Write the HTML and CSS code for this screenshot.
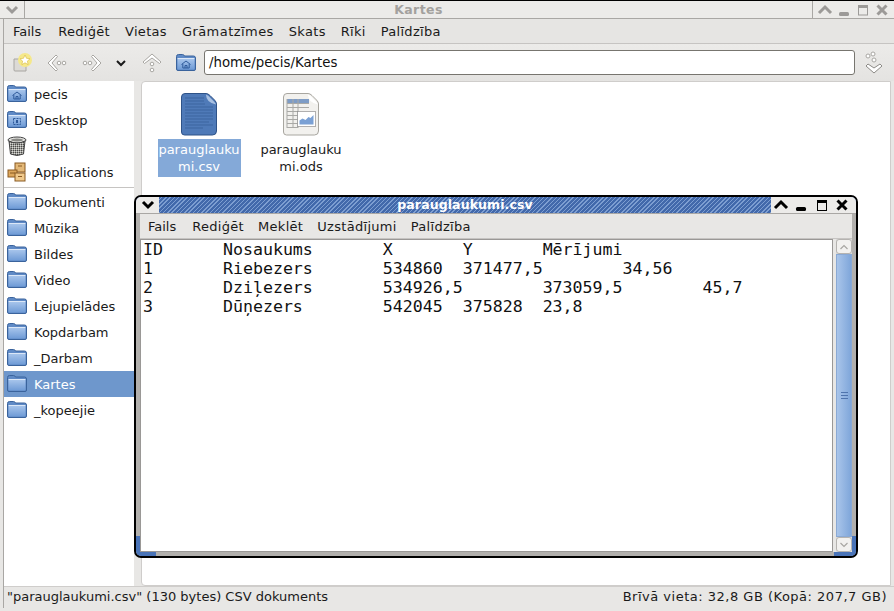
FILE: index.html
```html
<!DOCTYPE html>
<html lang="lv">
<head>
<meta charset="utf-8">
<title>Kartes</title>
<link rel="stylesheet" href="styles.css">
</head>
<body>
<svg class="defs" width="0" height="0">
  <defs>
    <linearGradient id="fg" x1="0" y1="0" x2="0" y2="1"><stop offset="0" stop-color="#a9c6ec"/><stop offset="1" stop-color="#6f9bd6"/></linearGradient>
    <symbol id="folder" viewBox="0 0 20 20">
      <path d="M.5 3.500q0-2 2-2h4q1.500 0 2 1.500h9q2 0 2 2v11q0 1.500-1.500 1.500h-16q-1.500 0-1.500-1.500z" fill="#5f8ac6" stroke="#3a639c"/>
      <rect x="1.500" y="5.500" width="17" height="11" rx="1" fill="url(#fg)"/>
      <path d="M1.500 5.500h17" stroke="#dbe7f7"/>
    </symbol>
    <symbol id="homefolder" viewBox="0 0 20 20">
      <use href="#folder"/>
      <path d="M5.500 11.500l4.500-3.500 4.500 3.500M6.800 11v4h6.400v-4M9 15v-2.500h2v2.500" fill="none" stroke="#2f5a9a"/>
    </symbol>
    <pattern id="hatch" width="2" height="2" patternUnits="userSpaceOnUse"><rect width="2" height="2" fill="#9a9a96"/><rect width="1" height="1" fill="#4a4a48"/><rect x="1" y="1" width="1" height="1" fill="#d8d8d4"/></pattern>
  </defs>
</svg>
<div class="app">
  <header class="titlebar">
    <span class="tb-btn tb-menu"><svg width="14" height="10" viewBox="0 0 14 10"><path d="M2 2l5 5 5-5" fill="none" stroke="#9c9a98" stroke-width="3"/></svg></span>
    <span class="title">Kartes</span>
    <span class="tb-btn-group">
      <svg width="16" height="14" viewBox="0 0 16 14"><path d="M2 10l6-6 6 6" fill="none" stroke="#9c9a98" stroke-width="3"/></svg>
      <svg width="16" height="14" viewBox="0 0 16 14"><rect x="3" y="9" width="10" height="4" rx="1.500" fill="#9c9a98"/></svg>
      <svg width="16" height="14" viewBox="0 0 16 14"><rect x="3.500" y="2.500" width="9" height="9.500" fill="none" stroke="#9c9a98"/><rect x="3" y="2" width="10" height="3" fill="#9c9a98"/></svg>
      <svg width="16" height="14" viewBox="0 0 16 14"><path d="M3.500 2.500l9 9m0-9l-9 9" stroke="#9c9a98" stroke-width="3"/></svg>
    </span>
  </header>
  <div class="body">
    <nav class="menubar">
      <span class="first">Fails</span><span>Rediģēt</span><span>Vietas</span><span class="wide">Grāmatzīmes</span><span>Skats</span><span>Rīki</span><span>Palīdzība</span>
    </nav>
    <div class="toolbar">
      <svg class="ti ti-star" width="22" height="22" viewBox="0 0 22 22"><path d="M1 7h12v12H2q-1 0-1-1z" fill="#dcdad6" stroke="#a8a6a2"/><circle cx="12" cy="8" r="7" fill="#f5e88a"/><path d="M12 3l1.500 3.300 3.500.4-2.600 2.400.7 3.500-3.100-1.800-3.100 1.800.7-3.500L7 6.700l3.500-.4z" fill="#fff" stroke="#d9b93a" stroke-width=".6"/></svg>
      <svg class="ti ti-back" width="22" height="22" viewBox="0 0 22 22"><path d="M10 3L2 11l8 8 1.500-1.500L6 11l5.500-6.500z" fill="#fff" stroke="#a8a6a2"/><circle cx="13" cy="11" r="1.800" fill="#fff" stroke="#a8a6a2"/><circle cx="18" cy="11" r="1.800" fill="#fff" stroke="#a8a6a2"/></svg>
      <svg class="ti ti-fwd" width="22" height="22" viewBox="0 0 22 22"><path d="M12 3l8 8-8 8-1.500-1.500L16 11l-5.500-6.500z" fill="#fff" stroke="#a8a6a2"/><circle cx="9" cy="11" r="1.800" fill="#fff" stroke="#a8a6a2"/><circle cx="4" cy="11" r="1.800" fill="#fff" stroke="#a8a6a2"/></svg>
      <svg class="ti ti-drop" width="12" height="8" viewBox="0 0 12 8"><path d="M2 2l4 4 4-4" fill="none" stroke="#1a1a1a" stroke-width="2"/></svg>
      <svg class="ti ti-up" width="22" height="22" viewBox="0 0 22 22"><path d="M2 10l9-8 9 8-1.500 1.500L11 6l-7.500 5.500z" fill="#fff" stroke="#a8a6a2"/><circle cx="11" cy="12" r="1.800" fill="#fff" stroke="#a8a6a2"/><circle cx="11" cy="18" r="1.800" fill="#fff" stroke="#a8a6a2"/></svg>
      <svg class="ti ti-home" width="20" height="20"><use href="#homefolder"/></svg>
      <div class="pathbox">/home/pecis/Kartes</div>
      <svg class="ti ti-go" width="22" height="24" viewBox="0 0 22 24"><circle cx="5" cy="5" r="2" fill="#fff" stroke="#a8a6a2"/><circle cx="10" cy="3" r="2" fill="#fff" stroke="#a8a6a2"/><circle cx="11" cy="9" r="2" fill="#fff" stroke="#a8a6a2"/><path d="M3 15l8 7 8-7-2-2-6 4-6-4z" fill="#fff" stroke="#8c8a86"/></svg>
    </div>
    <div class="main">
      <aside class="sidebar">
        <div class="place"><svg width="20" height="20"><use href="#homefolder"/></svg><span>pecis</span></div>
        <div class="place"><svg width="20" height="20" viewBox="0 0 20 20"><use href="#folder"/><path d="M6.500 8.500h7v6h-7z" fill="none" stroke="#2f5a9a" stroke-dasharray="2 1"/><rect x="9" y="10" width="2" height="3" fill="#2f5a9a"/></svg><span>Desktop</span></div>
        <div class="place"><svg width="20" height="21" viewBox="0 0 20 21"><ellipse cx="10" cy="4" rx="9" ry="3" fill="#e2e2de" stroke="#444"/><path d="M2 5l1.500 13q6.500 3 13 0L18 5q-8 4-16 0z" fill="url(#hatch)" stroke="#444"/><ellipse cx="10" cy="4" rx="6" ry="1.500" fill="#8a8a86"/></svg><span>Trash</span></div>
        <div class="place"><svg width="20" height="20" viewBox="0 0 20 20"><rect x="8" y="1" width="10" height="9" fill="#e3b878" stroke="#8a5a22"/><rect x="1" y="8" width="9" height="7" fill="#dda75c" stroke="#8a5a22"/><rect x="8" y="11" width="10" height="8" fill="#f0c98c" stroke="#8a5a22"/><path d="M11 14.500h4M3 11h5M11 4h4" stroke="#8a5a22"/></svg><span>Applications</span></div>
        <div class="sep"></div>
        <div class="place"><svg width="20" height="20"><use href="#folder"/></svg><span>Dokumenti</span></div>
        <div class="place"><svg width="20" height="20"><use href="#folder"/></svg><span>Mūzika</span></div>
        <div class="place"><svg width="20" height="20"><use href="#folder"/></svg><span>Bildes</span></div>
        <div class="place"><svg width="20" height="20"><use href="#folder"/></svg><span>Video</span></div>
        <div class="place"><svg width="20" height="20"><use href="#folder"/></svg><span>Lejupielādes</span></div>
        <div class="place"><svg width="20" height="20"><use href="#folder"/></svg><span>Kopdarbam</span></div>
        <div class="place"><svg width="20" height="20"><use href="#folder"/></svg><span>_Darbam</span></div>
        <div class="place selected"><svg width="20" height="20"><use href="#folder"/></svg><span>Kartes</span></div>
        <div class="place"><svg width="20" height="20"><use href="#folder"/></svg><span>_kopeejie</span></div>
      </aside>
      <section class="pane">
        <div class="file">
          <svg width="36" height="43" viewBox="0 0 36 43"><path d="M4 .5h21q2 0 4 2l4.500 4.500q2 2 2 4v27q0 4-4 4H3.500q-3 0-3-3V4q0-3.500 3.500-3.500z" fill="#4f7ab8" stroke="#2f5388"/><path d="M25 1.500q0 8 10 10-1-2-3-4l-4-4q-1-1-3-2z" fill="#a9c1e2"/><path d="M4 5h19M4 8h19M4 11h20M4 14h28M4 17h28M4 20h28M4 23h28M4 26h28M4 29h24M4 32h28M4 35h18" stroke="#3c659f"/></svg>
          <div class="fname sel">parauglauku<br>mi.csv</div>
        </div>
        <div class="file">
          <svg width="36" height="43" viewBox="0 0 36 43"><path d="M4 .5h21q2 0 4 2l4.500 4.500q2 2 2 4v27q0 4-4 4H3.500q-3 0-3-3V4q0-3.500 3.500-3.500z" fill="#f2f1ee" stroke="#a8a6a0"/><path d="M25 1.500q0 8 10 10-1-2-3-4l-4-4q-1-1-3-2z" fill="#fff"/><rect x="4" y="6" width="22" height="4" fill="#7e9cc6"/><path d="M4 10.500h22M4 14.500h22M4 18.500h11M4 22.500h11M4 26.500h11M4 30.500h11M4 34.500h11M4 6v29M10 6v29M15 6v29" stroke="#a9a9a6"/><rect x="14.500" y="18.500" width="18" height="15" fill="#fff" stroke="#666" stroke-dasharray="1 1"/><path d="M16.500 31.500v-4l3-2 3 1.500 3-3 2 1 3-3v9.500z" fill="#7aa0d4"/></svg>
          <div class="fname">parauglauku<br>mi.ods</div>
        </div>
      </section>
    </div>
    <footer class="statusbar">
      <span>"parauglaukumi.csv" (130 bytes) CSV dokuments</span>
      <span class="free">Brīvā vieta: 32,8 GB (Kopā: 207,7 GB)</span>
    </footer>
  </div>
  <div class="editor">
    <div class="ed-title">
      <span class="ed-btn"><svg width="14" height="10" viewBox="0 0 14 10"><path d="M2 2l5 5 5-5" fill="none" stroke="#000" stroke-width="3"/></svg></span>
      <span class="ed-caption">parauglaukumi.csv</span>
      <span class="ed-btns">
        <svg width="20" height="16" viewBox="0 0 20 16"><path d="M4 11l6-6 6 6" fill="none" stroke="#000" stroke-width="3"/></svg>
        <svg width="20" height="16" viewBox="0 0 20 16"><rect x="5" y="10" width="10" height="4" rx="1.500" fill="#000"/></svg>
        <svg width="20" height="16" viewBox="0 0 20 16"><rect x="5.500" y="3.500" width="9" height="10" fill="none" stroke="#000"/><rect x="5" y="3" width="10" height="3"/></svg>
        <svg width="20" height="16" viewBox="0 0 20 16"><path d="M5.500 3.500l9 9m0-9l-9 9" stroke="#000" stroke-width="3"/></svg>
      </span>
    </div>
    <nav class="ed-menu"><span class="first">Fails</span><span>Rediģēt</span><span>Meklēt</span><span>Uzstādījumi</span><span>Palīdzība</span></nav>
    <div class="ed-body">
      <pre class="ed-text">ID	Nosaukums	X	Y	Mērījumi
1	Riebezers	534860	371477,5	34,56
2	Dziļezers	534926,5	373059,5	45,7
3	Dūņezers	542045	375828	23,8</pre>
      <div class="scroll">
        <div class="sb-arrow"><svg width="10" height="6" viewBox="0 0 10 6"><path d="M1.500 5L5 1.500 8.500 5" fill="none" stroke="#a8a6a2" stroke-width="1.200"/></svg></div>
        <div class="sb-thumb"><span></span></div>
        <div class="sb-arrow"><svg width="10" height="6" viewBox="0 0 10 6"><path d="M1.500 1L5 4.500 8.500 1" fill="none" stroke="#a8a6a2" stroke-width="1.200"/></svg></div>
      </div>
    </div>
    <span class="corner corner-l"></span>
    <span class="corner corner-b"></span>
    <span class="corner corner-r"></span>
    <span class="corner corner-s"></span>
  </div>
</div>
</body>
</html>
```
FILE: styles.css
```css
* { box-sizing: border-box; }
html, body { margin: 0; padding: 0; }
body { width: 894px; height: 611px; overflow: hidden; background: #e8e7e5; font-family: "DejaVu Sans", sans-serif; font-size: 13px; color: #1a1a1a; }
.defs { position: absolute; }
.app { position: relative; width: 894px; height: 611px; display: flex; flex-direction: column; border-top: 1px solid #000; }
.titlebar { height: 18px; display: flex; align-items: center; background: #ecebe9; border-bottom: 1px solid #a9a7a4; }
.tb-btn { width: 25px; height: 17px; display: flex; align-items: center; justify-content: center; border-right: 1px solid #a9a7a4; }
.title { flex: 1; text-align: center; font-weight: bold; font-size: 12.500px; color: #a3a19e; letter-spacing: .4px; }
.tb-btn-group { display: flex; width: 82px; height: 17px; border-left: 1px solid #a9a7a4; align-items: center; justify-content: space-around; padding: 0 2px; }
.body { flex: 1; display: flex; flex-direction: column; margin: 0 0 3px 3px; border-left: 1px solid #a9a7a4; }
.menubar { height: 25px; display: flex; align-items: center; gap: 15px; padding-left: 9px; background: #e6e5e3; border-bottom: 1px solid #c6c4c2; letter-spacing: .3px; }
.first { letter-spacing: 0; }
.wide { letter-spacing: .45px; }
.menubar .first { margin-right: 2px; }
.toolbar { height: 37px; display: flex; align-items: center; background: linear-gradient(#ecebe9, #e4e3e1); padding-left: 9px; }
.ti { flex: none; }
.ti-back { margin-left: 11px; }
.ti-fwd { margin-left: 13px; }
.ti-drop { margin-left: 12px; }
.ti-up { margin-left: 14px; }
.ti-home { margin-left: 13px; }
.pathbox { width: 651px; height: 25px; margin-left: 8px; background: #fff; border: 1px solid #77756f; border-radius: 3px; padding-left: 4px; line-height: 23px; color: #111; font-size: 13.330px; }
.ti-go { margin-left: 8px; }
.main { flex: 1; min-height: 0; display: flex; }
.sidebar { width: 130px; background: #fff; }
.place { height: 26px; display: flex; align-items: center; gap: 7px; padding-left: 3px; }
.place svg { flex: none; }
.place.selected { background: #6e97cc; color: #fff; }
.sep { height: 2px; border-top: 1px solid #c6c4c2; margin: 2px 0 0; }
.pane { flex: 1; margin: 0 3px 0 7px; background: #fff; border: 1px solid #cfcdcb; border-radius: 4px 0 0 4px; display: flex; align-items: flex-start; padding: 11px 0 0 6px; }
.file { width: 102px; display: flex; flex-direction: column; align-items: center; }
.file svg { margin-bottom: 3px; }
.fname { width: 83px; text-align: center; line-height: 17px; padding: 2px 0; }
.fname.sel { background: #84a9d8; color: #fff; }
.statusbar { height: 22px; display: flex; justify-content: space-between; align-items: center; padding: 0 7px 2px 3px; border-top: 1px solid #cfcdcb; background: #e8e7e5; }
.free { letter-spacing: .5px; }
.editor { position: absolute; left: 134px; top: 194px; width: 724px; height: 363px; background: #b2b0ad; border: 2px solid #000; border-radius: 7px; display: flex; flex-direction: column; padding: 0 4px 4px; overflow: hidden; }
.ed-title { height: 17px; margin: 0 -4px; display: flex; align-items: stretch; background: repeating-linear-gradient(135deg, #7d9ed1 0 1px, #4269ab 1px 3px); border-bottom: 1px solid #a9a7a4; }
.ed-btn { width: 23px; display: flex; align-items: center; justify-content: center; background: #ecebe9; }
.ed-caption { flex: 1; text-align: center; color: #fff; font-weight: bold; font-size: 12.500px; line-height: 16px; letter-spacing: .1px; }
.ed-btns { width: 85px; display: flex; align-items: center; justify-content: space-around; background: #ecebe9; padding: 0 4px 0 0; }
.ed-menu { height: 25px; display: flex; align-items: center; gap: 14px; padding-left: 8px; background: #e8e7e5; border-bottom: 1px solid #c6c4c2; letter-spacing: .3px; }
.ed-menu .first { margin-right: 2px; }
.ed-body { flex: 1; min-height: 0; display: flex; background: #e8e7e5; }
.ed-text { flex: 1; margin: 0; background: #fff; border: 1px solid #9a9896; padding: 0 0 0 2px; font-family: "DejaVu Sans Mono", monospace; font-size: 16.600px; line-height: 19px; tab-size: 8; color: #111; }
.scroll { width: 16px; margin-left: 3px; background: #dcdbd9; display: flex; flex-direction: column; }
.sb-arrow { height: 15px; background: #f2f1ef; display: flex; align-items: center; justify-content: center; border: 1px solid #b5b3b0; border-radius: 3px; }
.sb-thumb { flex: 1; background: linear-gradient(90deg, #a9c5ea, #7fa6da); display: flex; align-items: center; justify-content: center; border: 1px solid #8aa9d4; }
.sb-thumb span { width: 7px; height: 7px; background: repeating-linear-gradient(#4f74ad 0 1px, transparent 1px 3px); }
.corner { position: absolute; background: #4a74b8; }
.corner-l { left: 0; bottom: 0; width: 4px; height: 20px; }
.corner-b { left: 4px; bottom: 0; width: 16px; height: 4px; }
.corner-r { right: 0; bottom: 0; width: 22px; height: 4px; }
.corner-s { right: 0; bottom: 0; width: 4px; height: 20px; }
```
